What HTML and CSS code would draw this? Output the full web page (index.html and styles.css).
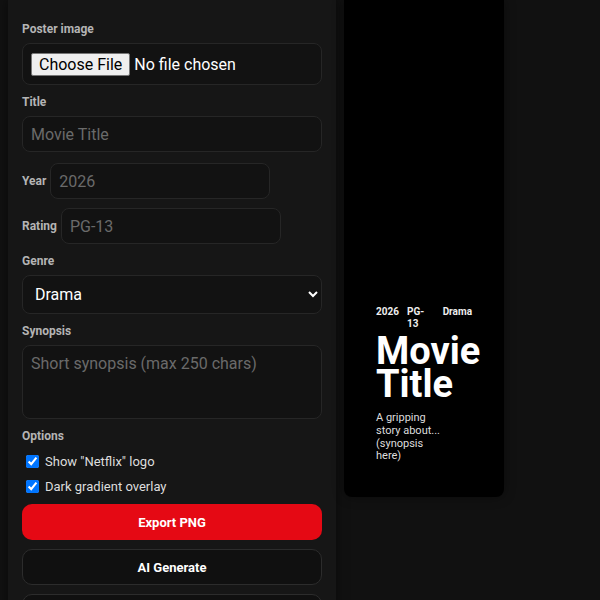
FILE: index.html
```html
<!DOCTYPE html>
<html lang="en">
<head>
<meta charset="utf-8">
<title>Poster Maker</title>
<link rel="stylesheet" href="styles.css">
</head>
<body>
<div class="app">
  <aside class="panel">
    <div class="field">
      <label class="lbl">Poster image</label>
      <input class="file" type="file">
    </div>
    <div class="field">
      <label class="lbl">Title</label>
      <input class="txt" type="text" placeholder="Movie Title">
    </div>
    <label class="inline">Year <input class="txt short" type="text" placeholder="2026"></label>
    <label class="inline">Rating <input class="txt short" type="text" placeholder="PG-13"></label>
    <div class="field">
      <label class="lbl">Genre</label>
      <select class="sel">
        <option>Drama</option>
        <option>Action</option>
        <option>Comedy</option>
      </select>
    </div>
    <div class="field">
      <label class="lbl">Synopsis</label>
      <textarea class="area" placeholder="Short synopsis (max 250 chars)"></textarea>
    </div>
    <div class="field opts">
      <label class="lbl">Options</label>
      <label class="chk"><input type="checkbox" checked> Show "Netflix" logo</label>
      <label class="chk"><input type="checkbox" checked> Dark gradient overlay</label>
    </div>
    <div class="buttons">
      <button class="btn primary">Export PNG</button>
      <button class="btn ghost">AI Generate</button>
      <button class="btn ghost" aria-label="Reset"></button>
    </div>
  </aside>
  <section class="preview">
    <div class="poster">
      <div class="meta"><span>2026</span><span>PG-13</span><span>Drama</span></div>
      <h1 class="ptitle">Movie Title</h1>
      <p class="psyn">A gripping story about... (synopsis here)</p>
    </div>
  </section>
</div>
</body>
</html>
```
FILE: styles.css
```css
html, body {
  margin: 0;
  padding: 0;
  background: #111111;
  font-family: Roboto, "Liberation Sans", Arial, sans-serif;
  color: #eeeeee;
  overflow: hidden;
}
.app {
  display: flex;
  align-items: flex-start;
  gap: 8px;
  padding-left: 8px;
}
.panel {
  width: 300px;
  padding: 22px 14px 20px 14px;
  background: #161616;
  box-shadow: 0 0 10px rgba(0,0,0,0.5);
  display: flex;
  flex-direction: column;
  gap: 10px;
  height: 640px;
}
.field {
  display: flex;
  flex-direction: column;
}
.lbl {
  font-size: 12px;
  line-height: 14px;
  font-weight: 700;
  color: #b4b4b4;
  margin-bottom: 7px;
}
.file {
  box-sizing: border-box;
  width: 100%;
  height: 42px;
  padding: 9px 8px;
  border: 1px solid #262626;
  border-radius: 8px;
  background: #121212;
  color: #ffffff;
  font-family: Roboto, "Liberation Sans", Arial, sans-serif;
  font-size: 16px;
}
.file::file-selector-button {
  background: #efefef;
  border: 1px solid #767676;
  border-radius: 2px;
  padding: 1px 7px;
  margin-right: 4px;
  color: #000;
  font-family: Roboto, "Liberation Sans", Arial, sans-serif;
  font-size: 16px;
  height: 23px;
}
.txt, .sel, .area {
  box-sizing: border-box;
  border: 1px solid #262626;
  border-radius: 8px;
  background: #121212;
  color: #ffffff;
  font-family: Roboto, "Liberation Sans", Arial, sans-serif;
  font-size: 16px;
  outline: none;
}
.txt {
  width: 100%;
  height: 36px;
  padding: 0 8px;
}
.txt::placeholder, .area::placeholder {
  color: #6a6a6a;
}
.inline {
  display: flex;
  align-items: center;
  gap: 4px;
  font-size: 12px;
  font-weight: 700;
  color: #b4b4b4;
  margin-top: 1px;
}
.inline + .inline {
  margin-top: -1px;
}
.txt.short {
  width: 220px;
}
.sel {
  width: 100%;
  height: 39px;
  padding: 0 8px;
  color-scheme: dark;
}
.area {
  width: 100%;
  height: 74px;
  padding: 8px 8px;
  resize: none;
  display: block;
  line-height: 20px;
}
.opts .lbl {
  margin-bottom: 6px;
}
.chk {
  display: flex;
  align-items: center;
  font-size: 13px;
  line-height: 25px;
  color: #dddddd;
}
.chk input {
  margin: 0 6px 0 4px;
  width: 13px;
  height: 13px;
}
.buttons {
  display: flex;
  flex-direction: column;
  gap: 9px;
  margin-top: -5px;
}
.btn {
  height: 36px;
  border-radius: 10px;
  font-family: Roboto, "Liberation Sans", Arial, sans-serif;
  font-size: 13px;
  font-weight: 700;
  color: #ffffff;
  cursor: pointer;
}
.btn.primary {
  background: #e50914;
  border: none;
}
.btn.ghost {
  background: #101010;
  border: 1px solid #2c2c2c;
}
.preview {
  display: flex;
}
.poster {
  box-sizing: border-box;
  width: 160px;
  height: 497px;
  background: #000000;
  border-radius: 0 0 8px 8px;
  padding: 0 32px 34px 32px;
  display: flex;
  flex-direction: column;
  justify-content: flex-end;
  box-shadow: 0 0 12px rgba(0,0,0,0.4);
}
.meta {
  display: flex;
  gap: 8px;
  font-size: 10px;
  line-height: 12px;
  font-weight: 700;
  color: #eeeeee;
  margin-bottom: 5px;
}
.ptitle {
  margin: 0 0 11px 0;
  font-size: 38px;
  line-height: 33px;
  font-weight: 700;
  color: #ffffff;
}
.psyn {
  margin: 0;
  max-width: 66px;
  font-size: 11px;
  line-height: 12.7px;
  color: #dddddd;
}
```
